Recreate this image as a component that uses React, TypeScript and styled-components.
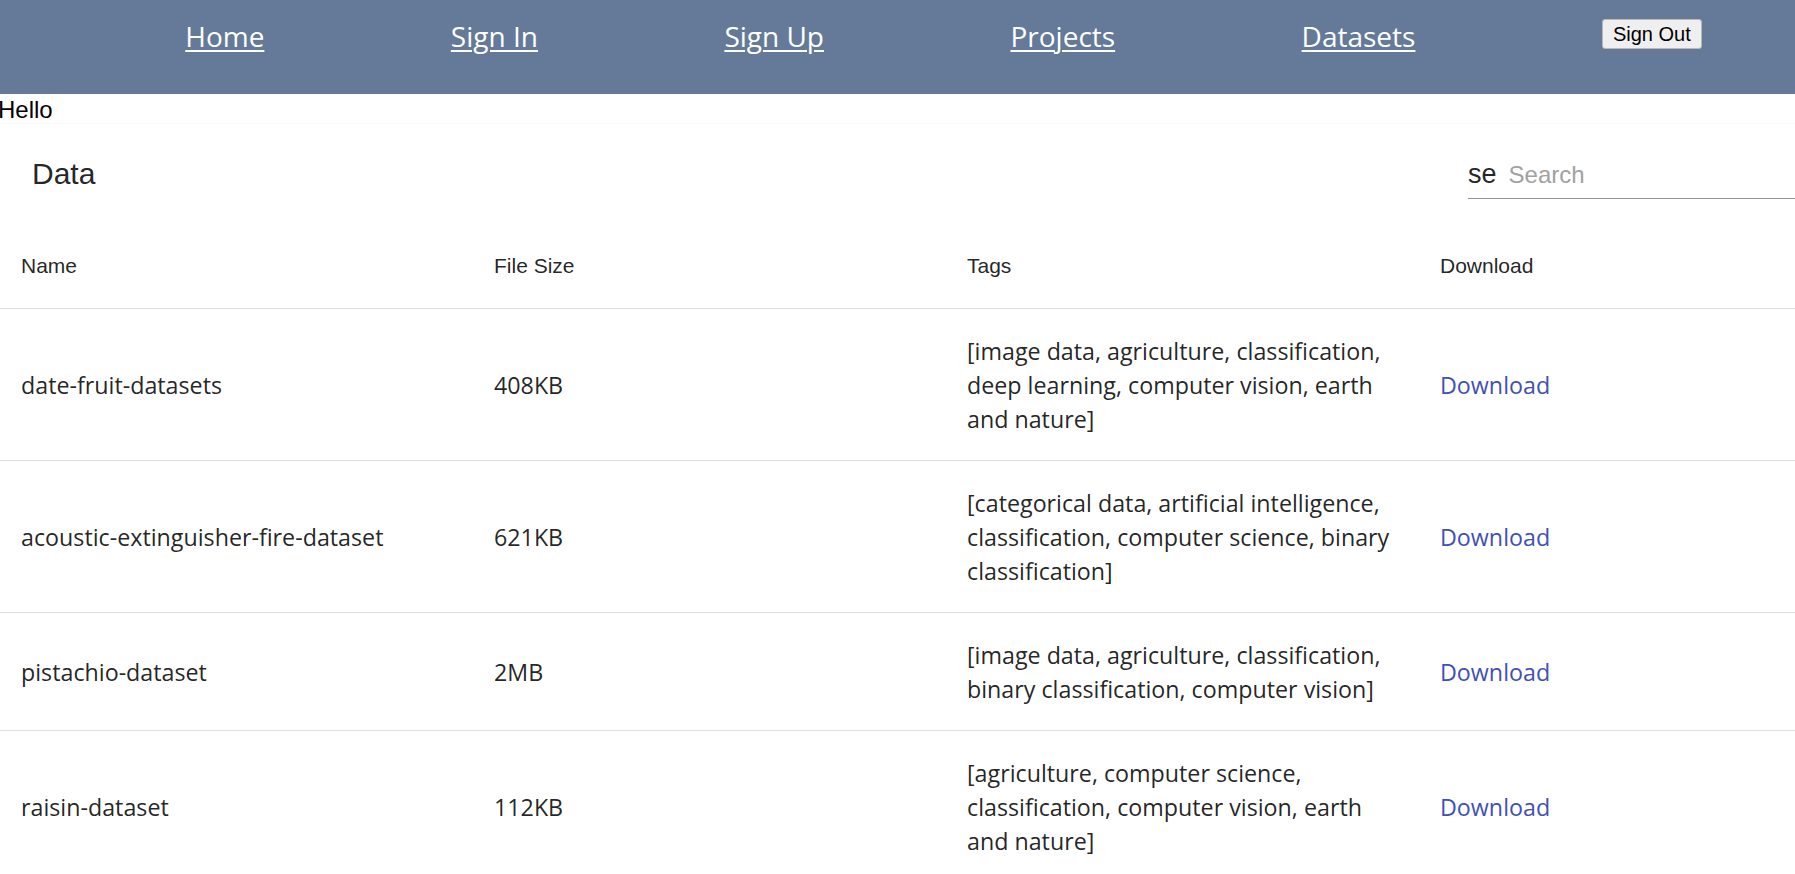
import React from "react";
import styled, { createGlobalStyle } from "styled-components";

const GlobalStyle = createGlobalStyle`
  html, body {
    margin: 0;
    padding: 0;
    overflow-x: hidden;
    background: #fff;
  }
  body {
    font-family: "Liberation Sans", Arial, sans-serif;
  }
`;

const rows = [
  {
    name: "date-fruit-datasets",
    size: "408KB",
    tags: "[image data, agriculture, classification, deep learning, computer vision, earth and nature]",
  },
  {
    name: "acoustic-extinguisher-fire-dataset",
    size: "621KB",
    tags: "[categorical data, artificial intelligence, classification, computer science, binary classification]",
  },
  {
    name: "pistachio-dataset",
    size: "2MB",
    tags: "[image data, agriculture, classification, binary classification, computer vision]",
  },
  {
    name: "raisin-dataset",
    size: "112KB",
    tags: "[agriculture, computer science, classification, computer vision, earth and nature]",
  },
];

const App = () => {
  return (
    <>
      <GlobalStyle />
      <NavBar>
        <NavLink href="#">Home</NavLink>
        <NavLink href="#">Sign In</NavLink>
        <NavLink href="#">Sign Up</NavLink>
        <NavLink href="#">Projects</NavLink>
        <NavLink href="#">Datasets</NavLink>
        <SignOut>Sign Out</SignOut>
      </NavBar>
      <Greeting>Hello</Greeting>
      <Paper>
        <Toolbar>
          <Title>Data</Title>
          <SearchField>
            <SearchLabel>se</SearchLabel>
            <SearchInput placeholder="Search" />
          </SearchField>
        </Toolbar>
        <Table>
          <colgroup>
            <col />
            <col />
            <col />
            <col />
          </colgroup>
          <thead>
            <tr>
              <HeadCell>Name</HeadCell>
              <HeadCell>File Size</HeadCell>
              <HeadCell>Tags</HeadCell>
              <HeadCell>Download</HeadCell>
            </tr>
          </thead>
          <tbody>
            {rows.map((r) => (
              <tr key={r.name}>
                <Cell>{r.name}</Cell>
                <Cell>{r.size}</Cell>
                <Cell>{r.tags}</Cell>
                <Cell>
                  <DownloadLink href="#">Download</DownloadLink>
                </Cell>
              </tr>
            ))}
          </tbody>
        </Table>
      </Paper>
    </>
  );
};

export default App;

const NavBar = styled.nav`
  height: 94px;
  box-sizing: border-box;
  background: #647a98;
  display: flex;
  justify-content: space-around;
  align-items: flex-start;
  padding: 0 0 0 92px;
`;

const NavLink = styled.a`
  font-family: "Open Sans", "Noto Sans", sans-serif;
  font-size: 28px;
  line-height: 38px;
  margin-top: 17px;
  color: #fff;
  text-decoration: underline;
  text-underline-offset: 3px;
  text-decoration-thickness: 2px;
`;

const SignOut = styled.button`
  margin-top: 19px;
  height: 30px;
  padding: 0 10px;
  font-family: "Liberation Sans", Arial, sans-serif;
  font-size: 20px;
  color: #000;
  background: #efefef;
  border: 1px solid #b8b8b8;
  border-radius: 3px;
`;

const Greeting = styled.div`
  font-family: "Liberation Sans", Arial, sans-serif;
  font-size: 24px;
  line-height: 32px;
  height: 30px;
  color: #000;
  margin-left: -2px;
`;

const Paper = styled.div`
  width: 1892px;
  background: #fff;
  box-shadow: 0 2px 1px -1px rgba(0, 0, 0, 0.2), 0 1px 1px 0 rgba(0, 0, 0, 0.14),
    0 1px 3px 0 rgba(0, 0, 0, 0.12);
`;

const Toolbar = styled.div`
  height: 100px;
  display: flex;
  align-items: center;
  justify-content: space-between;
  padding: 0 24px 0 32px;
`;

const Title = styled.div`
  font-family: "Liberation Sans", Arial, sans-serif;
  font-size: 30px;
  color: rgba(0, 0, 0, 0.87);
`;

const SearchField = styled.label`
  width: 400px;
  display: flex;
  align-items: center;
  gap: 12px;
  border-bottom: 1px solid rgba(0, 0, 0, 0.42);
  padding: 6px 0 8px;
  margin-top: 4px;
`;

const SearchLabel = styled.span`
  font-family: "Liberation Sans", Arial, sans-serif;
  font-size: 27px;
  color: rgba(0, 0, 0, 0.87);
`;

const SearchInput = styled.input`
  flex: 1;
  border: none;
  outline: none;
  padding: 0;
  font-family: "Liberation Sans", Arial, sans-serif;
  font-size: 24px;
  color: rgba(0, 0, 0, 0.87);
  &::placeholder {
    color: #a2a2a2;
  }
`;

const Table = styled.table`
  width: 1892px;
  table-layout: fixed;
  border-collapse: collapse;
  col {
    width: 473px;
  }
`;

const HeadCell = styled.th`
  height: 84px;
  box-sizing: border-box;
  padding: 0 16px 0 21px;
  text-align: left;
  font-family: "Liberation Sans", Arial, sans-serif;
  font-weight: 400;
  font-size: 21px;
  color: rgba(0, 0, 0, 0.87);
  border-bottom: 1px solid #e0e0e0;
`;

const Cell = styled.td`
  padding: 25px 22px 24px 21px;
  font-family: "Open Sans", "Noto Sans", sans-serif;
  font-size: 23.25px;
  line-height: 34px;
  color: rgba(0, 0, 0, 0.87);
  border-bottom: 1px solid #e0e0e0;
  vertical-align: middle;
`;

const DownloadLink = styled.a`
  color: #3f51b5;
  text-decoration: none;
`;
